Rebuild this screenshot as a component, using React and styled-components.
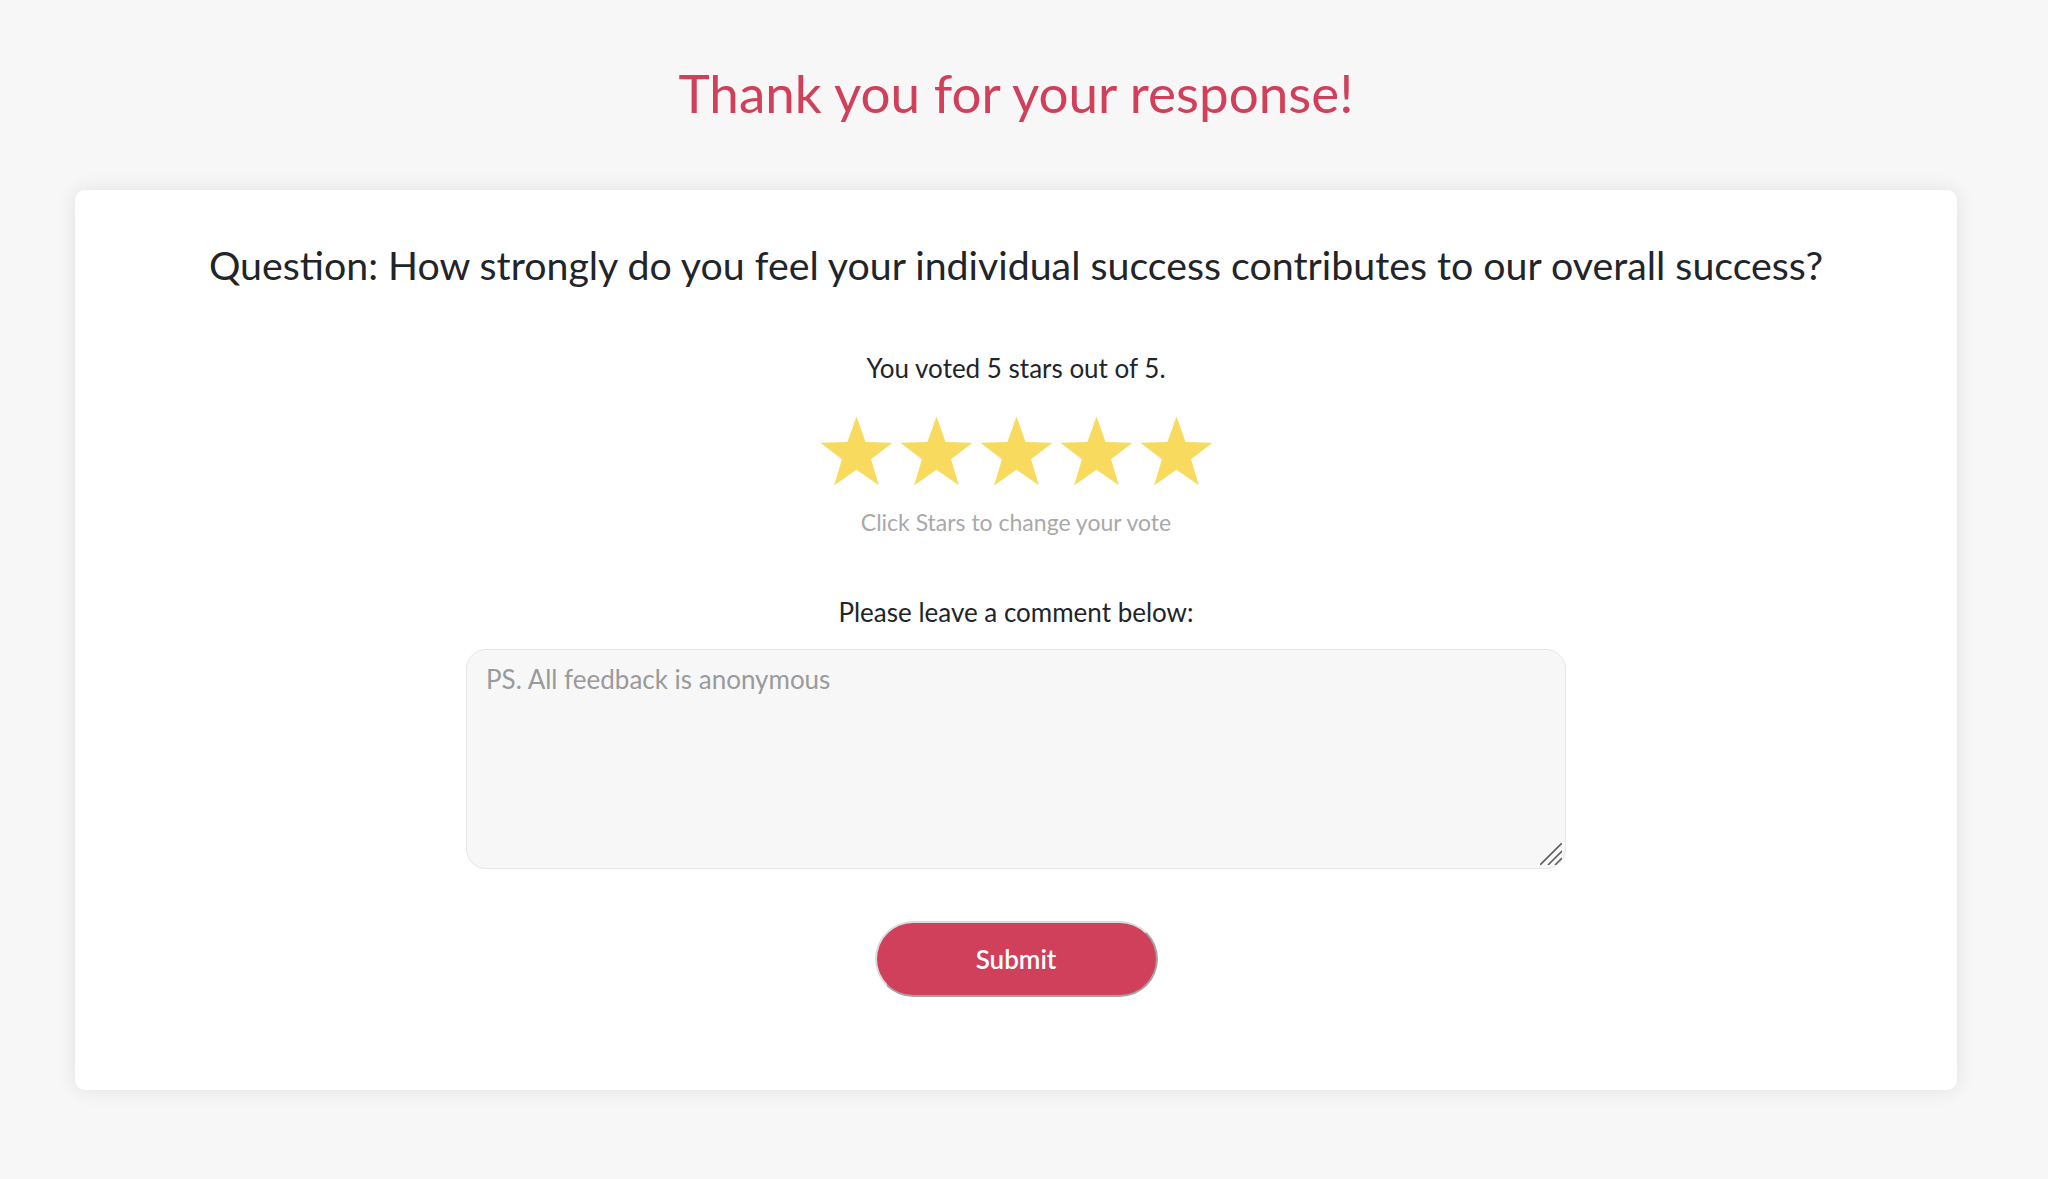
import React, { useState } from "react";
import styled, { createGlobalStyle } from "styled-components";

const GlobalStyle = createGlobalStyle`
  html, body {
    margin: 0;
    padding: 0;
    background: #f7f7f7;
    font-family: Lato, "Open Sans", sans-serif;
  }
  * {
    box-sizing: border-box;
  }
`;

const starPoints = (() => {
  const pts = [];
  const cx = 50;
  const cy = 52.5;
  const R = 52;
  const r = 21;
  for (let i = 0; i < 10; i++) {
    const rad = i % 2 === 0 ? R : r;
    const a = (Math.PI / 5) * i - Math.PI / 2;
    pts.push(`${(cx + rad * Math.cos(a)).toFixed(2)},${(cy + rad * Math.sin(a)).toFixed(2)}`);
  }
  return pts.join(" ");
})();

const Star = ({ filled, onClick }) => (
  <StarButton type="button" onClick={onClick} aria-label="star">
    <svg viewBox="0 0 100 97" width="73" height="71">
      <polygon points={starPoints} fill={filled ? "#f7da5e" : "#e4e4e4"} />
    </svg>
  </StarButton>
);

const App = () => {
  const [rating, setRating] = useState(5);
  const [comment, setComment] = useState("");

  return (
    <Page>
      <GlobalStyle />
      <Title>Thank you for your response!</Title>
      <Card>
        <Question>
          Question: How strongly do you feel your individual success contributes to our overall
          success?
        </Question>
        <Voted>You voted {rating} stars out of 5.</Voted>
        <Stars>
          {[1, 2, 3, 4, 5].map((n) => (
            <Star key={n} filled={n <= rating} onClick={() => setRating(n)} />
          ))}
        </Stars>
        <Hint>Click Stars to change your vote</Hint>
        <Label>Please leave a comment below:</Label>
        <CommentWrap>
          <Comment
            placeholder="PS. All feedback is anonymous"
            value={comment}
            onChange={(e) => setComment(e.target.value)}
          />
          {/* resize grip, drawn like the macOS one */}
          <Grip viewBox="0 0 22 22" width="22" height="22">
            <path d="M0 22 L22 0 M8 22 L22 8 M15 22 L22 15" stroke="#5f5f5f" strokeWidth="1.6" />
          </Grip>
        </CommentWrap>
        <Submit type="button">Submit</Submit>
      </Card>
    </Page>
  );
};

const Page = styled.div`
  display: flex;
  flex-direction: column;
  align-items: stretch;
  padding: 61px 91px 88px 75px;
  min-height: 100vh;
`;

const Title = styled.h1`
  margin: 0;
  text-align: center;
  font-size: 53px;
  line-height: 1.2;
  font-weight: 400;
  color: #d1405a;
`;

const Card = styled.div`
  margin-top: 65px;
  background: #fff;
  border-radius: 10px;
  box-shadow: 0 0 20px rgba(0, 0, 0, 0.09);
  display: flex;
  flex-direction: column;
  align-items: center;
  padding: 51px 40px 93px;
`;

const Question = styled.h2`
  margin: 0;
  font-size: 39.3px;
  line-height: 1.2;
  font-weight: 400;
  color: #212529;
  text-align: center;
`;

const Voted = styled.p`
  margin: 65px 0 0;
  font-size: 26px;
  line-height: 1.2;
  color: #212529;
`;

const Stars = styled.div`
  display: flex;
  gap: 7px;
  margin-top: 32px;
`;

const StarButton = styled.button`
  border: none;
  background: none;
  padding: 0;
  cursor: pointer;
  display: block;
  line-height: 0;
`;

const Hint = styled.p`
  margin: 22px 0 0;
  font-size: 23px;
  line-height: 1.2;
  color: #a9a9a9;
`;

const Label = styled.p`
  margin: 60px 0 0;
  font-size: 26px;
  line-height: 1.2;
  color: #212529;
`;

const CommentWrap = styled.div`
  position: relative;
  margin-top: 21px;
  width: 1100px;
  height: 220px;
`;

const Comment = styled.textarea`
  display: block;
  width: 100%;
  height: 100%;
  border: 1px solid #e6e6e6;
  border-radius: 20px;
  background: #f7f7f7;
  padding: 14px 19px;
  font-family: Lato, "Open Sans", sans-serif;
  font-size: 26px;
  line-height: 1.2;
  color: #333;
  outline: none;
  resize: none;

  &::placeholder {
    color: #9a9a9a;
  }
`;

const Grip = styled.svg`
  position: absolute;
  right: 4px;
  bottom: 4px;
  pointer-events: none;
`;

const Submit = styled.button`
  margin-top: 52px;
  width: 283px;
  height: 76px;
  border-radius: 40px;
  background: #d1405a;
  color: #fff;
  font-family: Lato, "Open Sans", sans-serif;
  font-size: 26px;
  font-weight: 600;
  border: 2px solid;
  border-color: #dcdcdc #a4a4a4 #a4a4a4 #dcdcdc;
  cursor: pointer;
`;

export default App;
